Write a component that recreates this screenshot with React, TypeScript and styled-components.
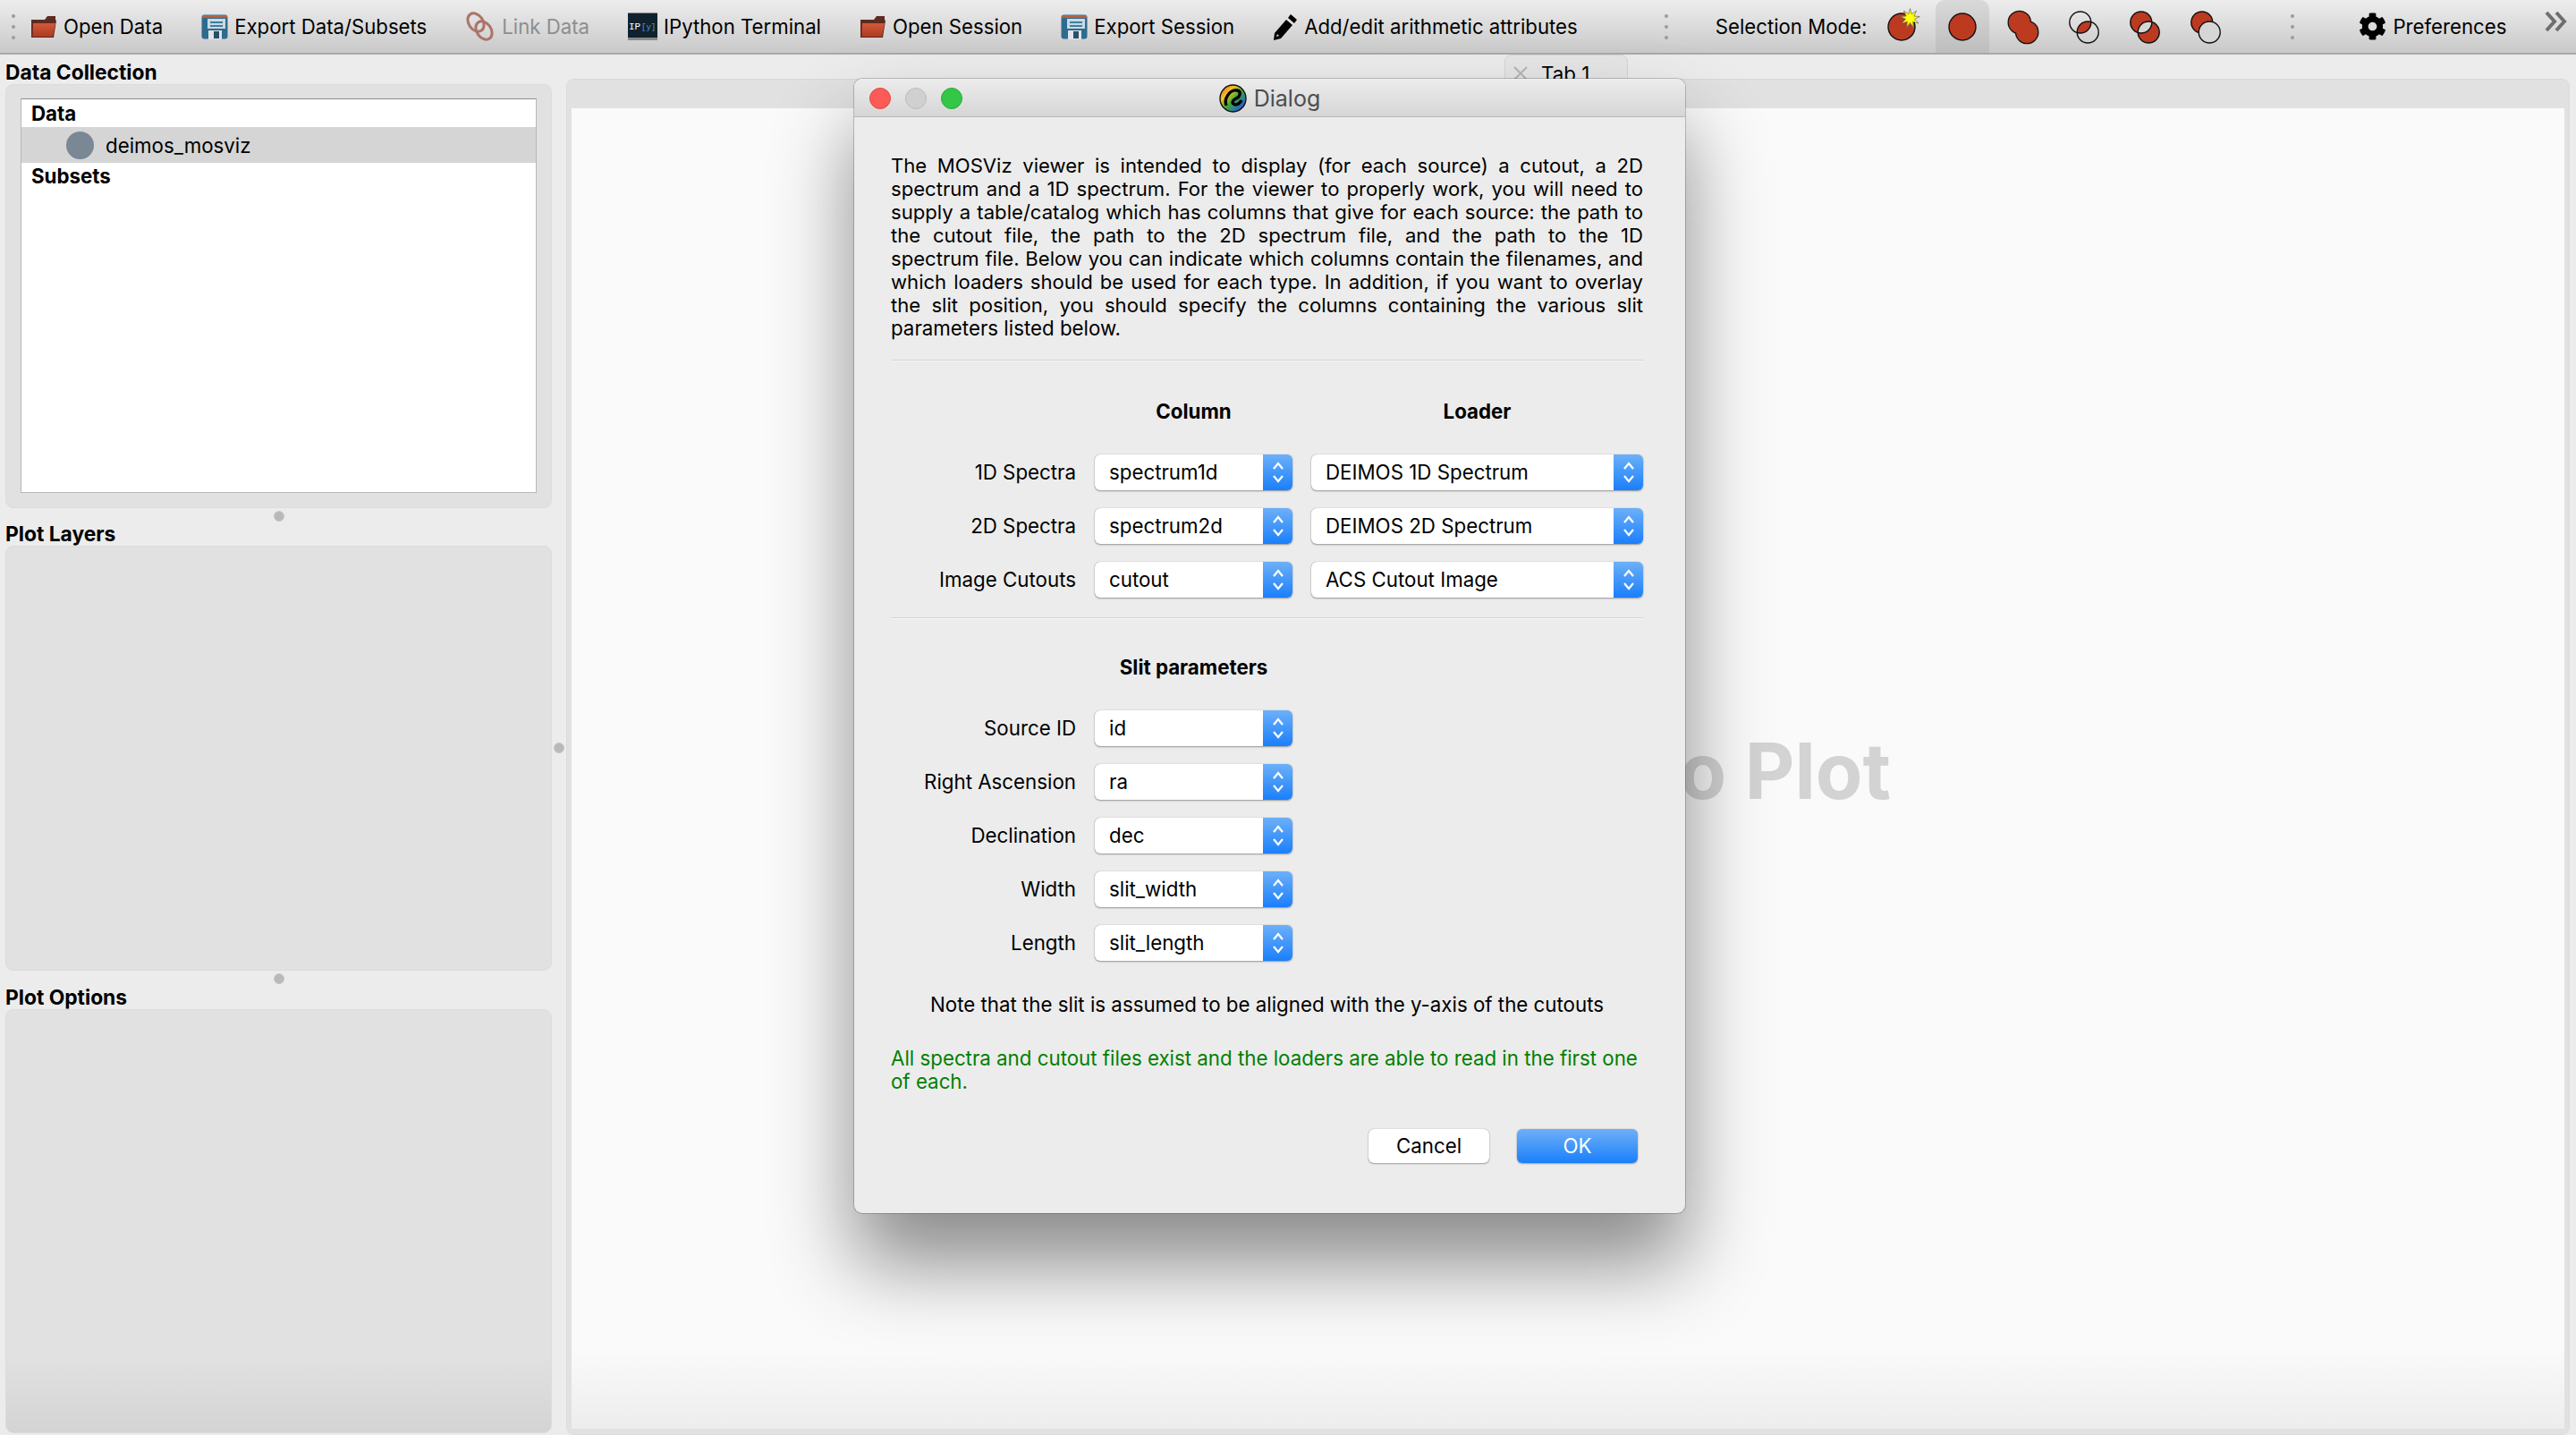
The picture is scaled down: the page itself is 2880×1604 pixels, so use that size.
// App.tsx
import React from "react";
import styled, { createGlobalStyle } from "styled-components";
import { FaCog } from "react-icons/fa";

const GlobalStyle = createGlobalStyle`
  html, body {
    margin: 0;
    padding: 0;
    background: #ececec;
  }
  * {
    box-sizing: border-box;
  }
`;

const Window = styled.div`
  position: relative;
  width: 2880px;
  height: 1604px;
  overflow: hidden;
  display: flex;
  flex-direction: column;
  background: #ececec;
  color: #000;
  font-family: Inter, "Liberation Sans", sans-serif;
  font-size: 22.3px;
`;

// toolbar
const Toolbar = styled.div`
  flex: none;
  height: 61px;
  display: flex;
  align-items: center;
  background: linear-gradient(#ededed, #c9c9c9);
  border-bottom: 2px solid #a9a9a9;
  font-size: 22.2px;
  white-space: nowrap;
`;

const Grip = styled.div<{ $left: number }>`
  flex: none;
  margin-left: ${({ $left }) => $left}px;
  width: 4px;
  height: 36px;
  background: radial-gradient(circle, #a0a0a0 0 2px, transparent 2.2px) center top / 4px 12px repeat-y;
`;

const ToolGroup = styled.div<{ $left: number }>`
  display: flex;
  align-items: center;
  gap: 43px;
  margin-left: ${({ $left }) => $left}px;
`;

const ToolButton = styled.div<{ $off?: boolean }>`
  display: flex;
  align-items: center;
  gap: 7px;
  height: 34px;
  color: ${({ $off }) => ($off ? "#8e8e8e" : "#000")};
`;

const ModeLabel = styled.span`
  margin-left: 53px;
`;

const ModeRow = styled.div`
  display: flex;
  gap: 8px;
  margin-left: 9px;
  height: 59px;
`;

const ModeSlot = styled.div<{ $on?: boolean }>`
  width: 60px;
  height: 59px;
  border-radius: 10px 10px 0 0;
  background: ${({ $on }) => ($on ? "linear-gradient(#d9d9d9, #bdbdbd)" : "transparent")};
`;

const Overflow = styled.div`
  margin-left: auto;
  margin-right: 9px;
  margin-top: -12px;
  line-height: 0;
`;

// main area
const Main = styled.div`
  flex: 1;
  min-height: 0;
  display: flex;
`;

const Dock = styled.div`
  flex: none;
  width: 611px;
  margin-left: 6px;
  display: flex;
  flex-direction: column;
`;

const DockTitle = styled.div<{ $h: number }>`
  flex: none;
  height: ${({ $h }) => $h}px;
  display: flex;
  align-items: flex-end;
  font-weight: 700;
  font-size: 22.8px;
  line-height: 26px;
`;

const DockPanel = styled.div<{ $h: number; $shade?: boolean }>`
  flex: none;
  height: ${({ $h }) => $h}px;
  padding: 15px 16px 16px;
  border: 1px solid #dcdcdc;
  border-radius: 9px;
  background: ${({ $shade }) =>
    $shade ? "linear-gradient(#e1e1e1 82%, #d4d4d4 100%)" : "#e1e1e1"};
`;

const Splitter = styled.div<{ $h: number }>`
  flex: none;
  height: ${({ $h }) => $h}px;
  padding-top: 3px;
  display: flex;
  justify-content: center;
`;

const SplitDot = styled.div`
  flex: none;
  width: 12px;
  height: 12px;
  border-radius: 50%;
  background: #b9b9b9;
  border: 1px solid #c6c6c6;
`;

const VSplit = styled.div`
  flex: none;
  width: 16px;
  padding-top: 769px;
  display: flex;
  justify-content: center;
`;

const DataList = styled.div`
  height: 100%;
  background: #fff;
  border: 1px solid #b8b8b8;
  border-top-color: #8c8c8c;
`;

const ListHead = styled.div<{ $h: number }>`
  height: ${({ $h }) => $h}px;
  padding-left: 11px;
  display: flex;
  align-items: center;
  font-weight: 700;
`;

const ListRow = styled.div`
  height: 40px;
  display: flex;
  align-items: center;
  gap: 13px;
  padding-left: 50px;
  background: #d5d5d5;
`;

const Swatch = styled.div`
  width: 31px;
  height: 31px;
  border-radius: 50%;
  background: #7a8794;
`;

const Center = styled.div`
  flex: 1;
  min-width: 0;
  display: flex;
  flex-direction: column;
  margin-right: 7px;
  align-items: stretch;
`;

const TabStrip = styled.div`
  flex: none;
  height: 7px;
  display: flex;
  justify-content: center;
  padding-right: 4px;
`;

const Tab = styled.div`
  flex: none;
  width: 138px;
  height: 42px;
  display: flex;
  align-items: center;
  gap: 15px;
  padding-left: 9px;
  border: 1px solid #d6d6d6;
  border-radius: 8px 8px 0 0;
  background: #e6e6e6;
`;

const Pane = styled.div`
  flex: 1;
  min-height: 0;
  padding: 32px 5px 6px;
  background: #e1e1e1;
  border: 1px solid #dcdcdc;
  border-top-color: #d8d8d8;
  border-radius: 9px;
  margin-top: 20px;
`;

const Canvas = styled.div`
  height: 100%;
  display: flex;
  align-items: center;
  justify-content: center;
  background: linear-gradient(#fafafa 94%, #ededed 100%);
`;

const Hint = styled.div`
  font-size: 86px;
  font-weight: 700;
  color: #d3d3d3;
  margin-top: 5px;
`;

// dialog
const Dialog = styled.div`
  position: absolute;
  left: 955px;
  top: 88px;
  width: 929px;
  height: 1268px;
  background: #ececec;
  border-radius: 9px;
  box-shadow: 0 0 0 1px rgba(0, 0, 0, 0.2), 0 56px 90px rgba(0, 0, 0, 0.45);
  display: flex;
  flex-direction: column;
  overflow: hidden;
`;

const TitleBar = styled.div`
  position: relative;
  flex: none;
  height: 43px;
  padding-top: 2px;
  display: flex;
  align-items: center;
  justify-content: center;
  gap: 8px;
  background: linear-gradient(#ececec, #d6d6d6);
  border-bottom: 1px solid #b7b7b7;
  color: #4d4d4d;
  font-size: 25px;
`;

const Lights = styled.div`
  position: absolute;
  left: 17px;
  top: 10px;
  display: flex;
  gap: 16px;
`;

const Light = styled.div<{ $c: string; $b: string }>`
  width: 24px;
  height: 24px;
  border-radius: 50%;
  background: ${({ $c }) => $c};
  border: 1px solid ${({ $b }) => $b};
`;

const DialogBody = styled.div`
  padding: 41px 47px 0 41px;
  line-height: 26px;
`;

const Intro = styled.div`
  font-size: 22.1px;
  text-align-last: justify;
`;

const IntroLast = styled.div`
  text-align-last: left;
`;

const Rule = styled.div<{ $top: number }>`
  height: 2px;
  margin-top: ${({ $top }) => $top}px;
  background: linear-gradient(#d4d4d4 50%, #f6f6f6 50%);
`;

const FormGrid = styled.div<{ $top: number }>`
  display: grid;
  grid-template-columns: 207px 221px 371px;
  column-gap: 21px;
  row-gap: 20px;
  grid-auto-rows: 40px;
  margin-top: ${({ $top }) => $top}px;
`;

const GridHead = styled.div<{ $col: number }>`
  grid-column: ${({ $col }) => $col};
  text-align: center;
  font-weight: 700;
`;

const HeadRow = styled.div<{ $top: number }>`
  display: grid;
  grid-template-columns: 207px 221px 371px;
  column-gap: 21px;
  margin-top: ${({ $top }) => $top}px;
`;

const FieldLabel = styled.div`
  grid-column: 1;
  display: flex;
  align-items: center;
  justify-content: flex-end;
`;

const Combo = styled.div`
  display: flex;
  height: 40px;
  background: #fff;
  border-radius: 6px;
  box-shadow: 0 0 1px rgba(0, 0, 0, 0.4), 0 1px 2px rgba(0, 0, 0, 0.35);
  overflow: hidden;
`;

const ComboValue = styled.div`
  flex: 1;
  display: flex;
  align-items: center;
  padding-left: 16px;
`;

const ComboArrows = styled.div`
  flex: none;
  width: 33px;
  display: flex;
  align-items: center;
  justify-content: center;
  background: linear-gradient(#6cb0f9, #1a7ffb);
`;

const Note = styled.div`
  margin-top: 36px;
  text-align: center;
`;

const Status = styled.div`
  margin-top: 34px;
  color: #008000;
`;

const Buttons = styled.div`
  display: flex;
  justify-content: flex-end;
  gap: 31px;
  margin-top: 40px;
  padding-right: 6px;
`;

const DlgButton = styled.div<{ $primary?: boolean }>`
  width: 135px;
  height: 38px;
  display: flex;
  align-items: center;
  justify-content: center;
  border-radius: 6px;
  background: ${({ $primary }) => ($primary ? "linear-gradient(#6eb0f8, #1a7ffa)" : "#fff")};
  color: ${({ $primary }) => ($primary ? "#fff" : "#000")};
  box-shadow: 0 0 1px rgba(0, 0, 0, 0.4), 0 1px 2px rgba(0, 0, 0, 0.3);
`;

// icons
const Folder = () => (
  <svg width="30" height="26" viewBox="0 0 30 26">
    <defs>
      <linearGradient id="fold" x1="0" y1="0" x2="0" y2="1">
        <stop offset="0" stopColor="#d4593a" />
        <stop offset="1" stopColor="#a93b22" />
      </linearGradient>
    </defs>
    <path d="M1 5h15l3-4h9v4l1 1-3 19H1z" fill="#5c2c20" />
    <path d="M3 9h25l-3 15H2.5z" fill="url(#fold)" />
  </svg>
);

const Floppy = () => (
  <svg width="30" height="28" viewBox="0 0 30 28">
    <rect x="0.5" y="0.5" width="29" height="27" rx="3" fill="#2f6b8e" />
    <rect x="1" y="1" width="28" height="3" fill="#b5623f" />
    <rect x="7" y="5" width="20" height="11" fill="#c9d9e2" />
    <rect x="10" y="8" width="14" height="2" fill="#3f7ea3" />
    <rect x="10" y="12" width="14" height="2" fill="#3f7ea3" />
    <rect x="8" y="18" width="15" height="10" fill="#dfe5e8" />
    <rect x="14" y="19" width="6" height="8" fill="#2b4f66" />
  </svg>
);

const Rings = () => (
  <svg width="34" height="34" viewBox="0 0 34 34" fill="none">
    <g stroke="#ac7468" strokeWidth="3">
      <ellipse cx="12" cy="12" rx="8" ry="11" transform="rotate(-35 12 12)" />
      <ellipse cx="21" cy="21" rx="8" ry="11" transform="rotate(-35 21 21)" />
    </g>
  </svg>
);

const Terminal = () => (
  <svg width="33" height="31" viewBox="0 0 33 31">
    <rect width="33" height="31" fill="#8a8a8a" />
    <rect y="1" width="33" height="27" fill="#10222e" />
    <text x="1" y="19" fontFamily="Liberation Mono, monospace" fontSize="11" fill="#fff">
      IP
    </text>
    <text x="15" y="19" fontFamily="Liberation Mono, monospace" fontSize="9" fill="#5b9ac4">
      [y]
    </text>
  </svg>
);

const Pencil = () => (
  <svg width="28" height="30" viewBox="0 0 28 30">
    <path d="M20 1l7 6-3 4-7-6zM15 7l7 6-13 15-8 2 1-8zM5 23l-1 3 3-1z" fill="#000" />
  </svg>
);

const TabX = () => (
  <svg width="16" height="16" viewBox="0 0 16 16" fill="none" stroke="#b5b5b5" strokeWidth="2">
    <path d="M1 1l14 14M15 1L1 15" />
  </svg>
);

const RED = "#bc3a20";
const LINE = "#111";

const Star = () => {
  const pts = Array.from({ length: 18 }, (_, i) => {
    const a = (i * Math.PI) / 9;
    const r = i % 2 ? 5 : 11;
    return `${39.5 + r * Math.sin(a)},${20.5 - r * Math.cos(a)}`;
  }).join(" ");
  return <polygon points={pts} fill="#ffff00" stroke="#666" strokeWidth="0.7" />;
};

const ModeIcon = ({ kind }: { kind: number }) => {
  const a = { cx: 25.8, cy: 25, r: 12 };
  const b = { cx: 34.2, cy: 36, r: 12 };
  return (
    <svg width="60" height="59" viewBox="0 0 60 59">
      <defs>
        <clipPath id={`ca${kind}`}>
          <circle {...a} />
        </clipPath>
      </defs>
      {kind < 2 && <circle cx="30" cy="30" r="15" fill={RED} stroke={LINE} strokeWidth="1.4" />}
      {kind === 0 && <Star />}
      {kind === 2 && (
        <>
          <circle {...a} fill={RED} stroke={LINE} strokeWidth="2.6" />
          <circle {...b} fill={RED} stroke={LINE} strokeWidth="2.6" />
          <circle {...a} fill={RED} />
          <circle {...b} fill={RED} />
        </>
      )}
      {kind === 3 && (
        <>
          <circle {...b} fill={RED} clipPath={`url(#ca${kind})`} />
          <circle {...a} fill="none" stroke={LINE} strokeWidth="1.4" />
          <circle {...b} fill="none" stroke={LINE} strokeWidth="1.4" />
        </>
      )}
      {kind === 4 && (
        <>
          <circle {...a} fill={RED} />
          <circle {...b} fill={RED} />
          <circle {...b} fill="#d6d6d6" clipPath={`url(#ca${kind})`} />
          <circle {...a} fill="none" stroke={LINE} strokeWidth="1.4" />
          <circle {...b} fill="none" stroke={LINE} strokeWidth="1.4" />
        </>
      )}
      {kind === 5 && (
        <>
          <circle {...a} fill={RED} stroke={LINE} strokeWidth="1.4" />
          <circle {...b} fill="#d6d6d6" stroke={LINE} strokeWidth="1.4" />
        </>
      )}
    </svg>
  );
};

const Chevrons = () => (
  <svg width="26" height="24" viewBox="0 0 26 24" fill="none" stroke="#6e6e6e" strokeWidth="4">
    <path d="M2 2l9 10-9 10M13 2l9 10-9 10" />
  </svg>
);

const GlueLogo = () => (
  <svg width="31" height="32" viewBox="0 0 31 32">
    <defs>
      <linearGradient id="rainbow" x1="0" y1="0" x2="1" y2="1">
        <stop offset="0" stopColor="#e8472c" />
        <stop offset="0.3" stopColor="#f2c522" />
        <stop offset="0.55" stopColor="#3aa63c" />
        <stop offset="0.8" stopColor="#2a66c8" />
        <stop offset="1" stopColor="#6d2d9a" />
      </linearGradient>
    </defs>
    <ellipse cx="15.5" cy="16" rx="14.5" ry="15" fill="url(#rainbow)" stroke="#111" strokeWidth="1.4" />
    <path d="M8 24c-3-8 4-18 12-17 5 1 4 7-1 9-4 2-6 6-1 7 4 0 6-3 7-5" fill="none" stroke="#000" strokeWidth="3.4" />
  </svg>
);

const UpDown = () => (
  <svg width="16" height="30" viewBox="0 0 16 30" fill="none" stroke="#fff" strokeWidth="2.2">
    <path d="M3 11l5-6 5 6M3 19l5 6 5-6" />
  </svg>
);

const tools = [
  { label: "Open Data", icon: <Folder /> },
  { label: "Export Data/Subsets", icon: <Floppy /> },
  { label: "Link Data", icon: <Rings />, off: true },
  { label: "IPython Terminal", icon: <Terminal /> },
  { label: "Open Session", icon: <Folder /> },
  { label: "Export Session", icon: <Floppy /> },
  { label: "Add/edit arithmetic attributes", icon: <Pencil /> },
];

const introLines = [
  "The MOSViz viewer is intended to display (for each source) a cutout, a 2D",
  "spectrum and a 1D spectrum. For the viewer to properly work, you will need to",
  "supply a table/catalog which has columns that give for each source: the path to",
  "the cutout file, the path to the 2D spectrum file, and the path to the 1D",
  "spectrum file. Below you can indicate which columns contain the filenames, and",
  "which loaders should be used for each type. In addition, if you want to overlay",
  "the slit position, you should specify the columns containing the various slit",
];

const spectra = [
  { label: "1D Spectra", column: "spectrum1d", loader: "DEIMOS 1D Spectrum" },
  { label: "2D Spectra", column: "spectrum2d", loader: "DEIMOS 2D Spectrum" },
  { label: "Image Cutouts", column: "cutout", loader: "ACS Cutout Image" },
];

const slit = [
  { label: "Source ID", column: "id" },
  { label: "Right Ascension", column: "ra" },
  { label: "Declination", column: "dec" },
  { label: "Width", column: "slit_width" },
  { label: "Length", column: "slit_length" },
];

const ComboBox = ({ value }: { value: string }) => (
  <Combo>
    <ComboValue>{value}</ComboValue>
    <ComboArrows>
      <UpDown />
    </ComboArrows>
  </Combo>
);

export default function App() {
  return (
    <Window>
      <GlobalStyle />
      <Toolbar>
        <Grip $left={13} />
        <ToolGroup $left={17}>
          {tools.map((t) => (
            <ToolButton key={t.label} $off={t.off}>
              {t.icon}
              <span>{t.label}</span>
            </ToolButton>
          ))}
        </ToolGroup>
        <Grip $left={97} />
        <ModeLabel>Selection Mode:</ModeLabel>
        <ModeRow>
          {[0, 1, 2, 3, 4, 5].map((k) => (
            <ModeSlot key={k} $on={k === 1}>
              <ModeIcon kind={k} />
            </ModeSlot>
          ))}
        </ModeRow>
        <Grip $left={65} />
        <ToolGroup $left={72}>
          <ToolButton>
            <FaCog size={31} />
            <span>Preferences</span>
          </ToolButton>
        </ToolGroup>
        <Overflow>
          <Chevrons />
        </Overflow>
      </Toolbar>
      <Main>
        <Dock>
          <DockTitle $h={33}>Data Collection</DockTitle>
          <DockPanel $h={474}>
            <DataList>
              <ListHead $h={31}>Data</ListHead>
              <ListRow>
                <Swatch />
                deimos_mosviz
              </ListRow>
              <ListHead $h={28}>Subsets</ListHead>
            </DataList>
          </DockPanel>
          <Splitter $h={16}>
            <SplitDot />
          </Splitter>
          <DockTitle $h={26}>Plot Layers</DockTitle>
          <DockPanel $h={475} />
          <Splitter $h={16}>
            <SplitDot />
          </Splitter>
          <DockTitle $h={27}>Plot Options</DockTitle>
          <DockPanel $h={474} $shade />
        </Dock>
        <VSplit>
          <SplitDot />
        </VSplit>
        <Center>
          <TabStrip>
            <Tab>
              <TabX />
              Tab 1
            </Tab>
          </TabStrip>
          <Pane>
            <Canvas>
              <Hint>Drag Data To Plot</Hint>
            </Canvas>
          </Pane>
        </Center>
      </Main>

      <Dialog>
        <TitleBar>
          <Lights>
            <Light $c="#fc5b57" $b="#e2463f" />
            <Light $c="#d0d0d0" $b="#bcbcbc" />
            <Light $c="#33c748" $b="#27aa35" />
          </Lights>
          <GlueLogo />
          Dialog
        </TitleBar>
        <DialogBody>
          {introLines.map((line) => (
            <Intro key={line}>{line}</Intro>
          ))}
          <IntroLast>parameters listed below.</IntroLast>
          <Rule $top={22} />
          <HeadRow $top={43}>
            <GridHead $col={2}>Column</GridHead>
            <GridHead $col={3}>Loader</GridHead>
          </HeadRow>
          <FormGrid $top={35}>
            {spectra.map((r) => (
              <React.Fragment key={r.label}>
                <FieldLabel>{r.label}</FieldLabel>
                <ComboBox value={r.column} />
                <ComboBox value={r.loader} />
              </React.Fragment>
            ))}
          </FormGrid>
          <Rule $top={22} />
          <HeadRow $top={41}>
            <GridHead $col={2}>Slit parameters</GridHead>
          </HeadRow>
          <FormGrid $top={35}>
            {slit.map((r) => (
              <React.Fragment key={r.label}>
                <FieldLabel>{r.label}</FieldLabel>
                <ComboBox value={r.column} />
                <div />
              </React.Fragment>
            ))}
          </FormGrid>
          <Note>Note that the slit is assumed to be aligned with the y-axis of the cutouts</Note>
          <Status>
            All spectra and cutout files exist and the loaders are able to read in the first one of each.
          </Status>
          <Buttons>
            <DlgButton>Cancel</DlgButton>
            <DlgButton $primary>OK</DlgButton>
          </Buttons>
        </DialogBody>
      </Dialog>
    </Window>
  );
}
